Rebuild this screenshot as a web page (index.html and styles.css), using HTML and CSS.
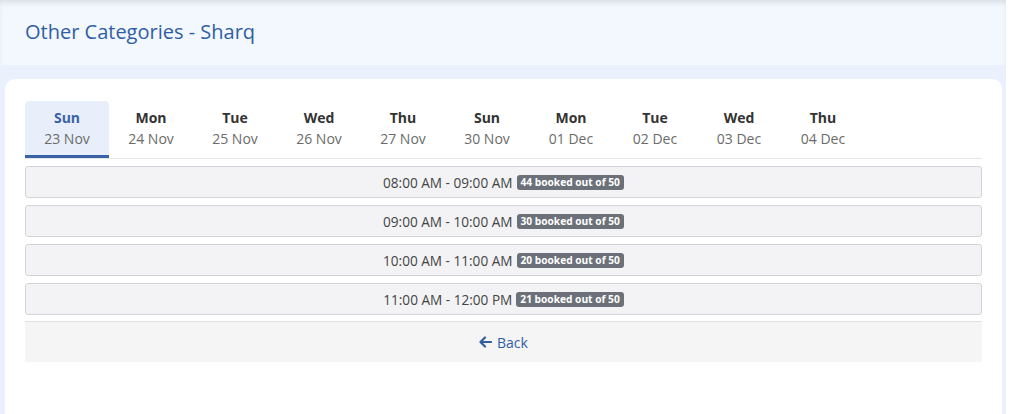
FILE: index.html
```html
<!DOCTYPE html>
<html lang="en">
<head>
    <meta charset="UTF-8">
    <meta name="viewport" content="width=device-width, initial-scale=1.0">
    <title>Other Categories - Sharq</title>
    <link rel="stylesheet" href="styles.css">
</head>
<body>
    <div class="page">
        <div class="page-header">
            <h1 class="page-title">Other Categories - Sharq</h1>
        </div>

        <div class="card">
            <div class="day-tabs">
                <div class="day-tab active"><div class="day-name">Sun</div><div class="day-date">23 Nov</div></div>
                <div class="day-tab"><div class="day-name">Mon</div><div class="day-date">24 Nov</div></div>
                <div class="day-tab"><div class="day-name">Tue</div><div class="day-date">25 Nov</div></div>
                <div class="day-tab"><div class="day-name">Wed</div><div class="day-date">26 Nov</div></div>
                <div class="day-tab"><div class="day-name">Thu</div><div class="day-date">27 Nov</div></div>
                <div class="day-tab"><div class="day-name">Sun</div><div class="day-date">30 Nov</div></div>
                <div class="day-tab"><div class="day-name">Mon</div><div class="day-date">01 Dec</div></div>
                <div class="day-tab"><div class="day-name">Tue</div><div class="day-date">02 Dec</div></div>
                <div class="day-tab"><div class="day-name">Wed</div><div class="day-date">03 Dec</div></div>
                <div class="day-tab"><div class="day-name">Thu</div><div class="day-date">04 Dec</div></div>
            </div>

            <div class="slot-list">
                <div class="slot">08:00 AM - 09:00 AM <span class="badge">44 booked out of 50</span></div>
                <div class="slot">09:00 AM - 10:00 AM <span class="badge">30 booked out of 50</span></div>
                <div class="slot">10:00 AM - 11:00 AM <span class="badge">20 booked out of 50</span></div>
                <div class="slot">11:00 AM - 12:00 PM <span class="badge">21 booked out of 50</span></div>
            </div>

            <div class="card-footer">
                <a href="#" class="back-link">
                    <svg width="13" height="12" viewBox="0 0 13 12">
                        <path d="M6 1.5L1.5 6L6 10.5M1.5 6H12" fill="none" stroke="currentColor" stroke-width="2.2" stroke-linecap="round" stroke-linejoin="round"/>
                    </svg>
                    Back
                </a>
            </div>
        </div>
    </div>
</body>
</html>
```

FILE: styles.css
```css
* {
    margin: 0;
    padding: 0;
    box-sizing: border-box;
}

body {
    font-family: "Open Sans", "Noto Sans", sans-serif;
    background: #ffffff;
    color: #444444;
    width: 1024px;
    height: 414px;
    overflow: hidden;
}

.page {
    width: 1006px;
    min-height: 414px;
    background: #eaf1fc;
}

.page-header {
    height: 65px;
    padding: 19px 25px 0;
    background: #f3f7fe;
    box-shadow: inset 0 4px 6px -2px rgba(0, 0, 0, 0.12);
}

.page-title {
    font-size: 20px;
    font-weight: 400;
    line-height: 26px;
    color: #2f5ea4;
}

.card {
    margin: 14px 4px 0 5px;
    padding: 22px 20px 52px;
    background: #ffffff;
    border-radius: 10px 10px 0 0;
    min-height: 335px;
}

.day-tabs {
    display: flex;
    border-bottom: 1px solid #e6e6e6;
}

.day-tab {
    width: 84px;
    padding: 6px 0 6px;
    text-align: center;
    font-size: 14px;
    line-height: 21px;
    border-bottom: 3px solid transparent;
    border-radius: 4px 4px 0 0;
}

.day-tab.active {
    background: #e8effb;
    border-bottom-color: #3a62a4;
}

.day-name {
    font-weight: 700;
    color: #333333;
}

.day-date {
    color: #6b6b6b;
}

.day-tab.active .day-name {
    color: #3a62a4;
}

.slot-list {
    display: flex;
    flex-direction: column;
    gap: 7px;
    margin-top: 7px;
}

.slot {
    display: flex;
    align-items: center;
    justify-content: center;
    gap: 4px;
    height: 32px;
    background: #f3f3f6;
    border: 1px solid #d3d3da;
    border-radius: 3px;
    font-size: 13.6px;
    color: #444444;
}

.badge {
    display: inline-block;
    padding: 0 4px;
    background: #6c7179;
    color: #ffffff;
    font-size: 10.2px;
    font-weight: 700;
    line-height: 15px;
    border-radius: 3px;
}

.card-footer {
    margin-top: 6px;
    height: 41px;
    display: flex;
    align-items: center;
    justify-content: center;
    background: #f5f5f5;
    border-top: 1px solid #e0e0e0;
}

.back-link {
    display: flex;
    align-items: center;
    gap: 5px;
    color: #2f5ea4;
    font-size: 14px;
    text-decoration: none;
}
```
